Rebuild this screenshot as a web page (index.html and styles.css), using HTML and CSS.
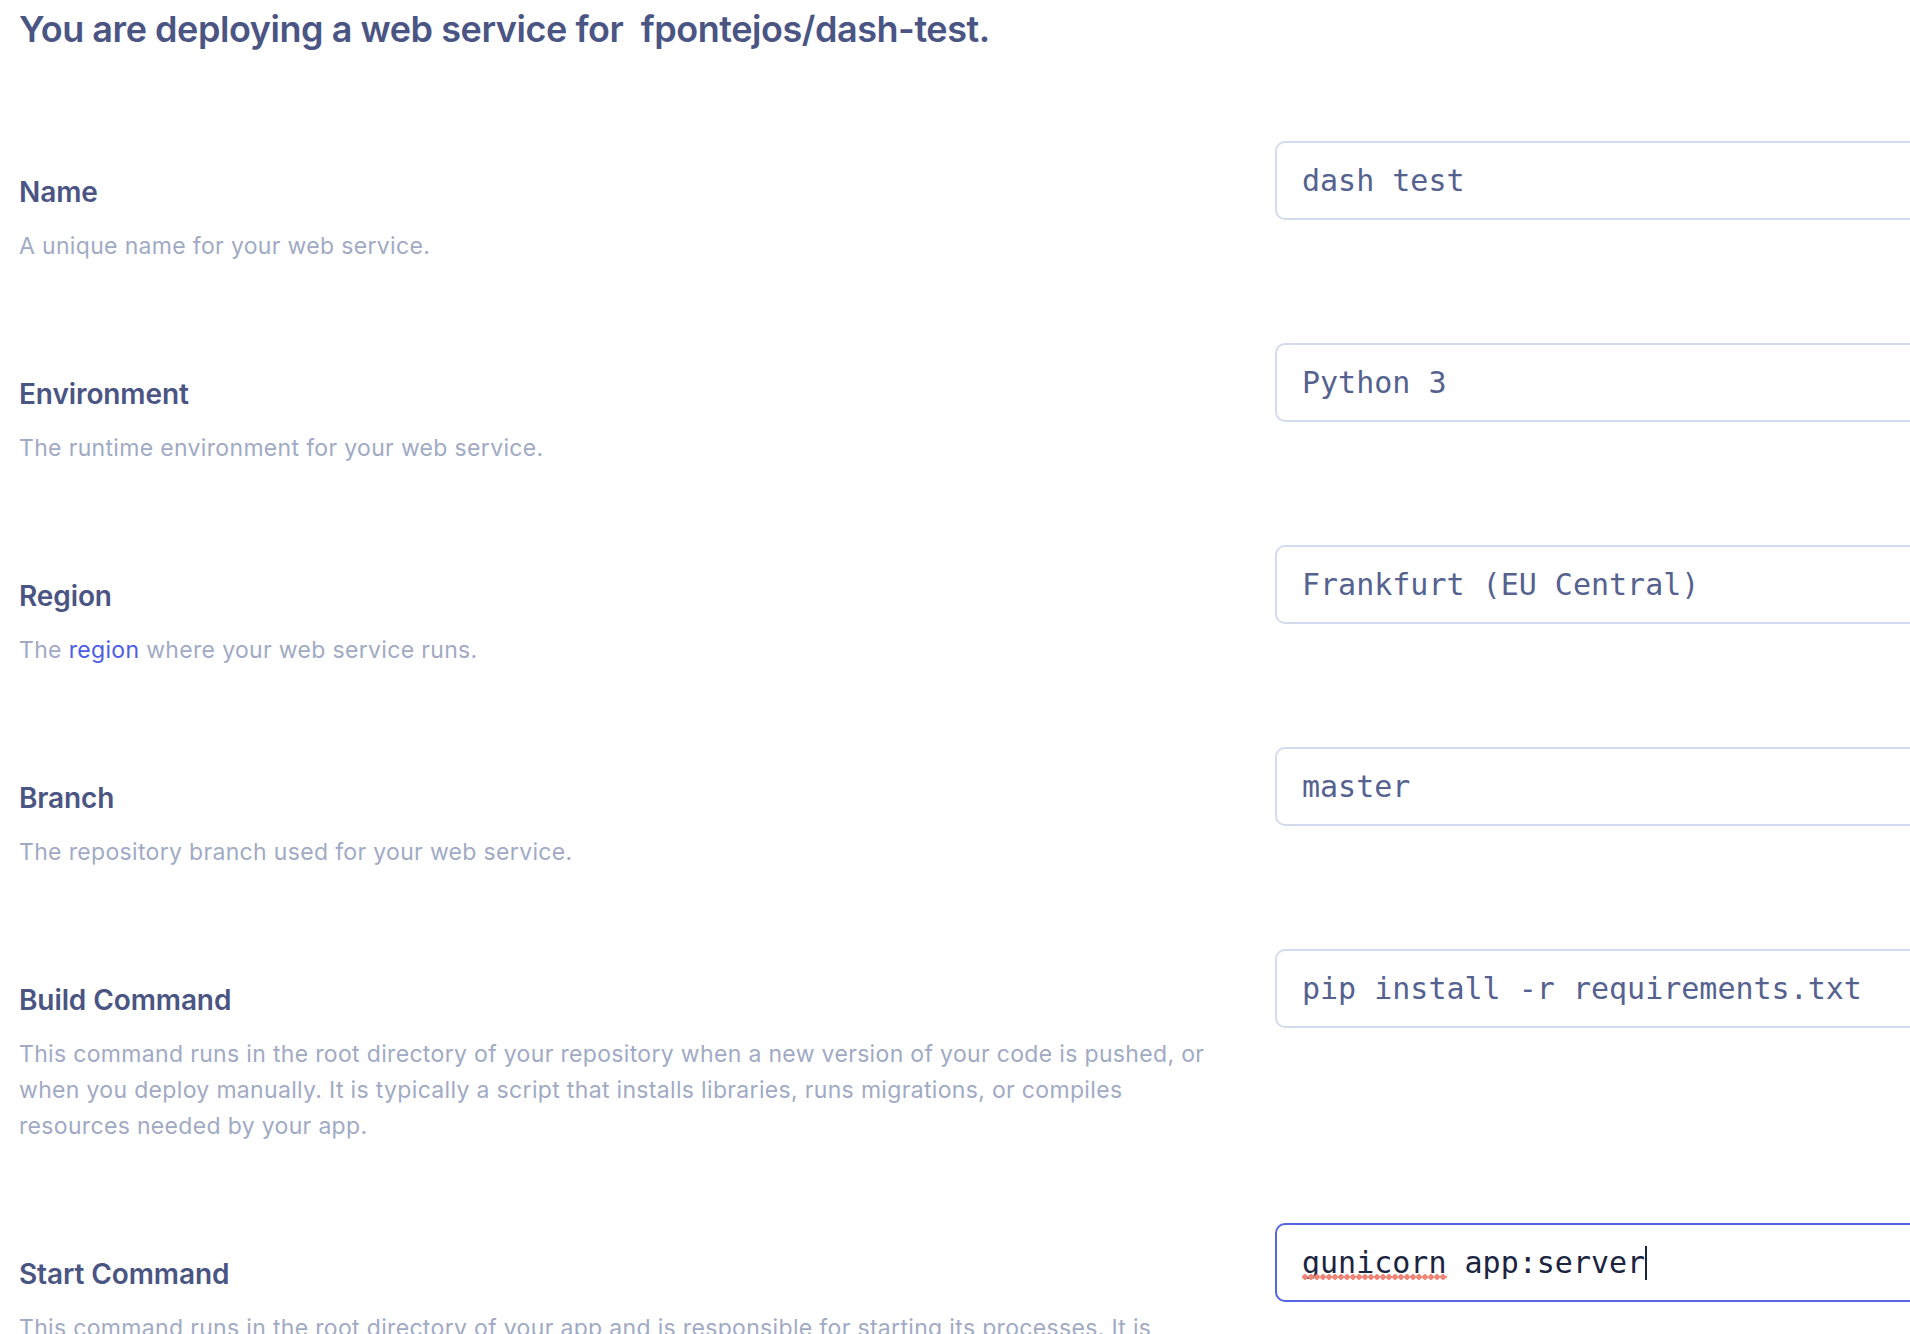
FILE: index.html
```html
<!DOCTYPE html>
<html lang="en">
<head>
<meta charset="utf-8">
<title>Deploy web service</title>
<link rel="stylesheet" href="styles.css">
</head>
<body>
<main class="page">
  <h1 class="title">You are deploying a web service for &nbsp;fpontejos/dash-test.</h1>
  <div class="form">
    <section class="row">
      <div class="info">
        <h2 class="label">Name</h2>
        <p class="desc">A unique name for your web service.</p>
      </div>
      <div class="field"><span class="value">dash test</span></div>
    </section>
    <section class="row">
      <div class="info">
        <h2 class="label">Environment</h2>
        <p class="desc">The runtime environment for your web service.</p>
      </div>
      <div class="field"><span class="value">Python 3</span></div>
    </section>
    <section class="row">
      <div class="info">
        <h2 class="label">Region</h2>
        <p class="desc">The <a class="link" href="#">region</a> where your web service runs.</p>
      </div>
      <div class="field"><span class="value">Frankfurt (EU Central)</span></div>
    </section>
    <section class="row">
      <div class="info">
        <h2 class="label">Branch</h2>
        <p class="desc">The repository branch used for your web service.</p>
      </div>
      <div class="field"><span class="value">master</span></div>
    </section>
    <section class="row">
      <div class="info">
        <h2 class="label">Build Command</h2>
        <p class="desc">This command runs in the root directory of your repository when a new version of your code is pushed, or when you deploy manually. It is typically a script that installs libraries, runs migrations, or compiles resources needed by your app.</p>
      </div>
      <div class="field"><span class="value">pip install -r requirements.txt</span></div>
    </section>
    <section class="row">
      <div class="info">
        <h2 class="label">Start Command</h2>
        <p class="desc">This command runs in the root directory of your app and is responsible for starting its processes. It is typically used to start a webserver for your app.</p>
      </div>
      <div class="field field-focus"><span class="value value-focus"><span class="misspelled">gunicorn</span> app:server</span><span class="caret"></span></div>
    </section>
  </div>
</main>
</body>
</html>
```

FILE: styles.css
```css
html, body {
  margin: 0;
  padding: 0;
  background: #ffffff;
  overflow: hidden;
}

.page {
  padding: 7px 0 0 19px;
  font-family: "Inter", "Lato", sans-serif;
  width: 2100px;
}

.title {
  margin: 0;
  font-size: 36px;
  line-height: 44px;
  font-weight: 600;
  color: #4a5583;
  letter-spacing: -0.45px;
}

.form {
  margin-top: 90px;
}

.row {
  display: grid;
  grid-template-columns: 1214px 760px;
  column-gap: 42px;
  align-items: start;
}

.info {
  padding: 34px 0 79px 0;
}

.label {
  margin: 0;
  font-size: 28px;
  line-height: 34px;
  font-weight: 600;
  color: #4a5583;
  letter-spacing: -0.1px;
}

.desc {
  margin: 19px 0 0 0;
  font-size: 23px;
  line-height: 36px;
  color: #a1aac4;
  letter-spacing: 0.33px;
}

.link {
  color: #4c5de6;
  text-decoration: none;
}

.field {
  box-sizing: border-box;
  height: 79px;
  border: 2px solid #d3dbee;
  border-radius: 10px;
  padding: 0 25px;
  display: flex;
  align-items: center;
  font-family: "DejaVu Sans Mono", monospace;
  font-size: 30px;
  color: #55628f;
  white-space: pre;
}

.field-focus {
  border-color: #5466e2;
}

.value-focus {
  color: #1b2440;
}

.misspelled {
  position: relative;
}

.misspelled::after {
  content: "";
  position: absolute;
  left: 0;
  right: 0;
  bottom: 0;
  height: 6px;
  background-image: radial-gradient(circle at 3px 3px, #ef8576 2.5px, transparent 3px);
  background-size: 6px 6px;
  background-repeat: repeat-x;
}

.caret {
  display: inline-block;
  width: 2px;
  height: 34px;
  background: #1b2440;
}
```
